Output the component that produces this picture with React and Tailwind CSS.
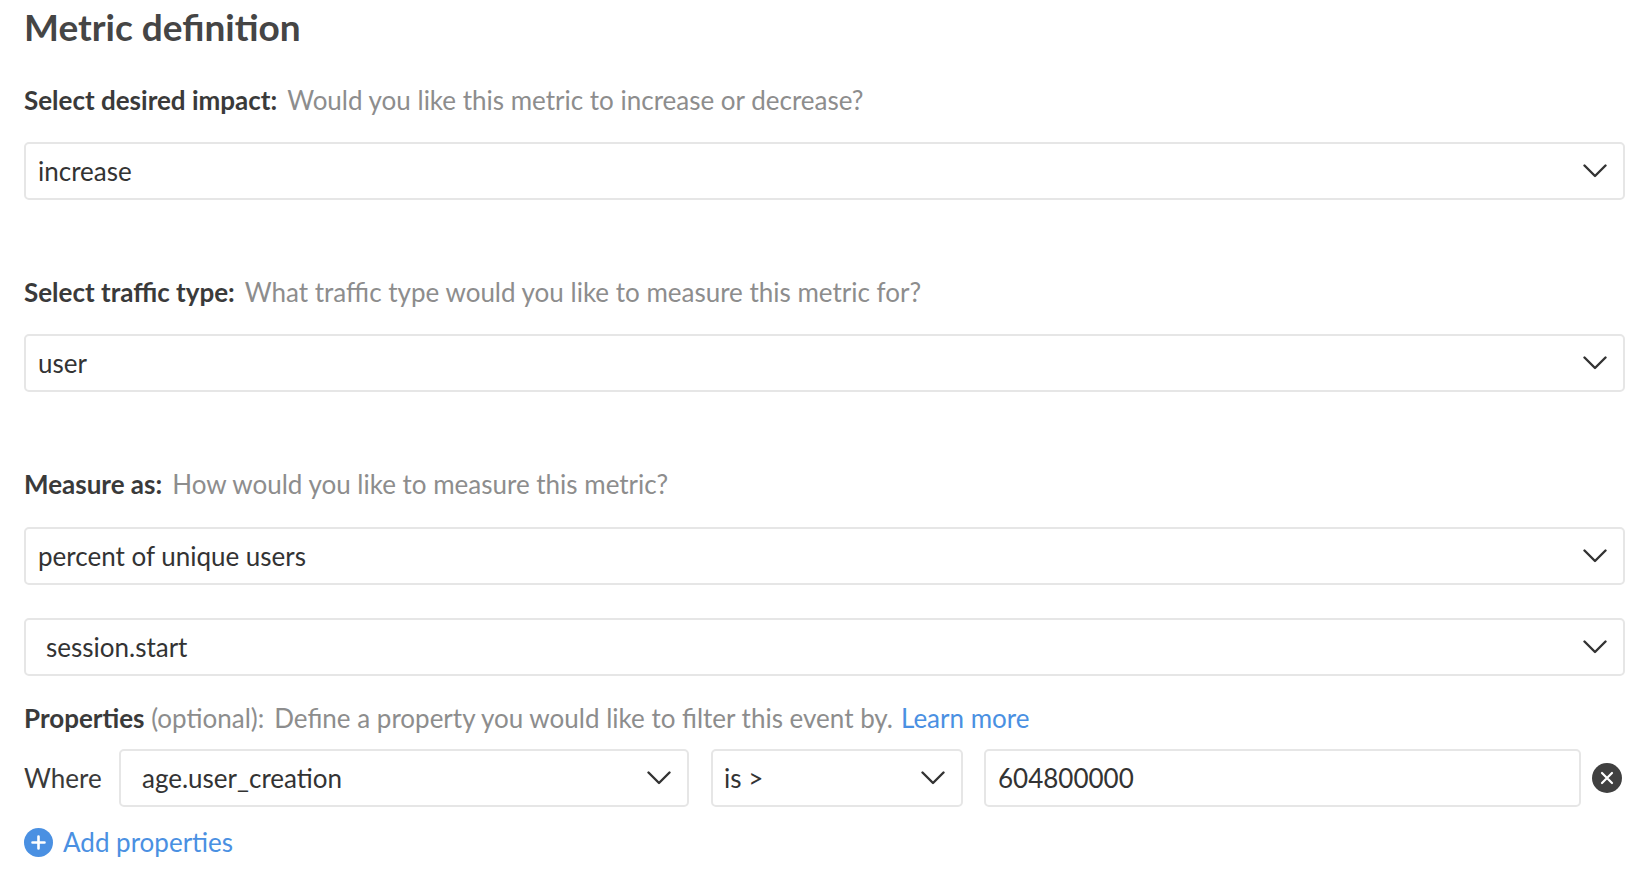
import React from "react";

const font = { fontFamily: "Lato, 'Noto Sans', sans-serif" };

const Chevron = ({ className = "" }) => (
  <svg className={className} width="24" height="14" viewBox="0 0 24 14" fill="none">
    <polyline points="1.5,1.5 12,12 22.5,1.5" stroke="#333" strokeWidth="2.4" strokeLinecap="round" strokeLinejoin="round" />
  </svg>
);

const Select = ({ value, inset = "pl-[12px]", className = "" }) => (
  <div className={`flex h-[58px] items-center justify-between rounded-[5px] border-2 border-[#e6e6e6] bg-white pr-[16px] ${inset} ${className}`}>
    <span className="text-[26px] text-[#333]">{value}</span>
    <Chevron />
  </div>
);

const Label = ({ title, hint, className = "" }) => (
  <div className={`text-[26px] leading-[40px] ${className}`}>
    <span className="font-bold text-[#3a3a3a]">{title}</span>
    <span className="ml-[10px] text-[#8d8d8d]">{hint}</span>
  </div>
);

export default function App() {
  return (
    <div className="min-h-screen bg-white pl-[24px] pr-[27px]" style={font}>
      <h1 className="pt-[4px] text-[37px] font-bold leading-[46px] text-[#454545]">Metric definition</h1>

      <Label className="mt-[30px]" title="Select desired impact:" hint="Would you like this metric to increase or decrease?" />
      <Select className="mt-[22px]" value="increase" />

      <Label className="mt-[72px]" title="Select traffic type:" hint="What traffic type would you like to measure this metric for?" />
      <Select className="mt-[22px]" value="user" />

      <Label className="mt-[72px]" title="Measure as:" hint="How would you like to measure this metric?" />
      <Select className="mt-[23px]" value="percent of unique users" />
      <Select className="mt-[33px]" value="session.start" inset="pl-[20px]" />

      {/* event properties */}
      <div className="mt-[22px] text-[26px] leading-[40px]">
        <span className="font-bold text-[#3a3a3a]">Properties</span>
        <span className="text-[#8d8d8d]"> (optional):</span>
        <span className="ml-[10px] text-[#8d8d8d]">Define a property you would like to filter this event by.</span>
        <a href="#" className="ml-[8px] text-[#4a90e2]">Learn more</a>
      </div>

      <div className="mt-[11px] flex items-center">
        <span className="w-[95px] text-[26px] text-[#3a3a3a]">Where</span>
        <Select className="w-[570px]" value="age.user_creation" inset="pl-[21px]" />
        <Select className="ml-[22px] w-[252px]" value="is >" inset="pl-[11px]" />
        <div className="ml-[21px] flex h-[58px] flex-1 items-center rounded-[5px] border-2 border-[#e6e6e6] pl-[12px] text-[26px] text-[#333]">
          604800000
        </div>
        <button className="ml-[11px] mr-[3px] flex h-[30px] w-[30px] items-center justify-center rounded-full bg-[#404040]">
          <svg width="14" height="14" viewBox="0 0 14 14">
            <path d="M2 2 L12 12 M12 2 L2 12" stroke="#fff" strokeWidth="2.2" strokeLinecap="round" />
          </svg>
        </button>
      </div>

      <button className="mt-[15px] flex items-center">
        <span className="flex h-[29px] w-[29px] items-center justify-center rounded-full bg-[#4a90e2]">
          <svg width="15" height="15" viewBox="0 0 15 15">
            <path d="M7.5 1.5 V13.5 M1.5 7.5 H13.5" stroke="#fff" strokeWidth="2.6" strokeLinecap="round" />
          </svg>
        </span>
        <span className="ml-[10px] text-[26px] leading-[40px] text-[#4a90e2]">Add properties</span>
      </button>
    </div>
  );
}
